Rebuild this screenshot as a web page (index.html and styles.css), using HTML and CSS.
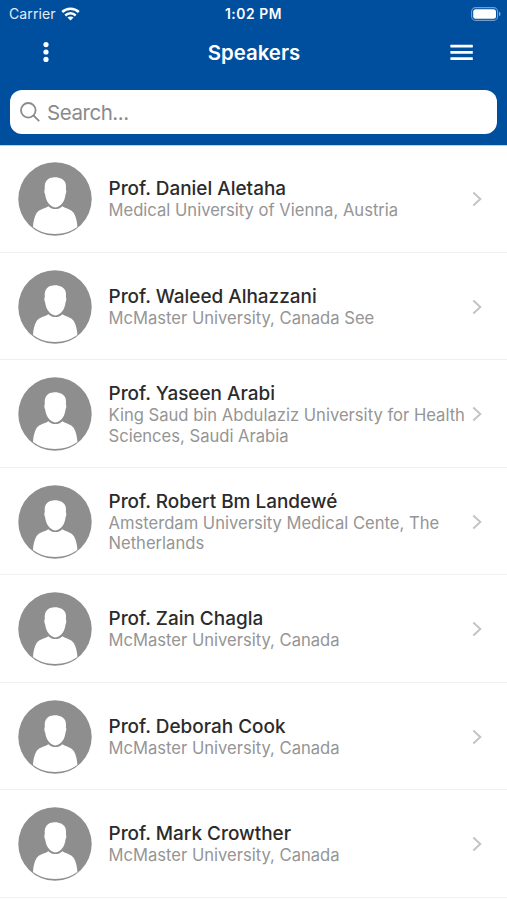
FILE: index.html
```html
<!DOCTYPE html>
<html lang="en">
  <head>
    <meta charset="UTF-8" />
    <meta name="viewport" content="width=device-width, initial-scale=1.0" />
    <title>Speakers</title>
    <link rel="stylesheet" href="styles.css">
  </head>
  <body>
    <svg class="sprite" width="0" height="0">
      <symbol id="person" viewBox="0 0 74 74">
        <circle cx="37" cy="37" r="36.7" fill="#8e8e8e" />
        <path fill="#fff" d="M26.8 27C26 19 30 15.6 35 15.4C40 14.6 46.2 16.6 47.6 21.5C48.2 24 48 26 47.9 27.5C48.7 28.4 48.3 31 47.5 32.4C47 38.6 43.2 44.8 37.4 45.4C31.6 44.8 27.8 38.6 27.2 32.4C26.3 31 26 28.4 26.8 27Z" />
        <path fill="#fff" d="M30.4 44.2C34.4 48 40.4 48 44.4 44.2C47.4 46.4 53 46.8 55.8 51C58.2 55 59.1 60 59.4 65C53 69.6 45.5 71.9 37 71.9C28.5 71.9 21 69.6 15 65C15.2 60 16.2 55 18.6 51C21.4 46.8 27.4 46.4 30.4 44.2Z" />
      </symbol>
      <symbol id="chevron" viewBox="0 0 10 16">
        <path d="M1.3 1.6L8.3 8L1.3 14.4" fill="none" stroke="#c4c4c6" stroke-width="2" />
      </symbol>
    </svg>

    <header class="header">
      <div class="status">
        <div class="carrier">
          <span>Carrier</span>
          <svg width="19" height="14" viewBox="0 0 19 14" fill="none" stroke="#fff" stroke-width="2.5">
            <path d="M1.2 5C5.8 .6 13.2 .6 17.8 5" />
            <path d="M4.3 8.5C7.2 5.6 11.8 5.6 14.7 8.5" />
            <path d="M9.5 13.6L6.5 10.6C8.1 9.1 10.9 9.1 12.5 10.6Z" fill="#fff" stroke="none" />
          </svg>
        </div>
        <span class="time">1:02 PM</span>
        <svg class="battery" width="30" height="14" viewBox="0 0 30 14">
          <rect x=".6" y=".6" width="26" height="12.8" rx="4" fill="none" stroke="#fff" stroke-opacity=".45" stroke-width="1.1" />
          <rect x="2.2" y="2.2" width="22.8" height="9.6" rx="2.5" fill="#fff" />
          <path d="M28 4.8C30 5.4 30 8.6 28 9.2Z" fill="#fff" fill-opacity=".5" />
        </svg>
      </div>

      <nav class="navbar">
        <svg width="6" height="22" viewBox="0 0 6 22" fill="#fff">
          <circle cx="3" cy="3.6" r="2.6" />
          <circle cx="3" cy="11" r="2.6" />
          <circle cx="3" cy="18.4" r="2.6" />
        </svg>
        <h1>Speakers</h1>
        <svg class="menu" width="23" height="17" viewBox="0 0 23 17" fill="#fff">
          <rect x=".4" y=".8" width="22.4" height="2.6" rx=".5" />
          <rect x=".4" y="7.1" width="22.4" height="2.6" rx=".5" />
          <rect x=".4" y="13.3" width="22.4" height="2.6" rx=".5" />
        </svg>
      </nav>

      <div class="search">
        <svg width="20" height="20" viewBox="0 0 20 20" fill="none" stroke="#8a8a8e" stroke-width="1.8">
          <circle cx="8.3" cy="8.3" r="7.3" />
          <path d="M13.4 13.4L19.2 19.2" />
        </svg>
        <span>Search...</span>
      </div>
    </header>

    <ul class="speakers">
      <li class="speaker">
        <svg class="avatar"><use href="#person" /></svg>
        <div class="info">
          <h2>Prof. Daniel Aletaha</h2>
          <p>Medical University of Vienna, Austria</p>
        </div>
        <svg class="chevron"><use href="#chevron" /></svg>
      </li>
      <li class="speaker">
        <svg class="avatar"><use href="#person" /></svg>
        <div class="info">
          <h2>Prof. Waleed Alhazzani</h2>
          <p>McMaster University, Canada See</p>
        </div>
        <svg class="chevron"><use href="#chevron" /></svg>
      </li>
      <li class="speaker">
        <svg class="avatar"><use href="#person" /></svg>
        <div class="info">
          <h2>Prof. Yaseen Arabi</h2>
          <p>King Saud bin Abdulaziz University for Health Sciences, Saudi Arabia</p>
        </div>
        <svg class="chevron"><use href="#chevron" /></svg>
      </li>
      <li class="speaker">
        <svg class="avatar"><use href="#person" /></svg>
        <div class="info">
          <h2>Prof. Robert Bm Landewé</h2>
          <p>Amsterdam University Medical Cente, The Netherlands</p>
        </div>
        <svg class="chevron"><use href="#chevron" /></svg>
      </li>
      <li class="speaker">
        <svg class="avatar"><use href="#person" /></svg>
        <div class="info">
          <h2>Prof. Zain Chagla</h2>
          <p>McMaster University, Canada</p>
        </div>
        <svg class="chevron"><use href="#chevron" /></svg>
      </li>
      <li class="speaker">
        <svg class="avatar"><use href="#person" /></svg>
        <div class="info">
          <h2>Prof. Deborah Cook</h2>
          <p>McMaster University, Canada</p>
        </div>
        <svg class="chevron"><use href="#chevron" /></svg>
      </li>
      <li class="speaker">
        <svg class="avatar"><use href="#person" /></svg>
        <div class="info">
          <h2>Prof. Mark Crowther</h2>
          <p>McMaster University, Canada</p>
        </div>
        <svg class="chevron"><use href="#chevron" /></svg>
      </li>
    </ul>
  </body>
</html>
```
FILE: styles.css
```css
* {
  box-sizing: border-box;
}

body {
  height: 900px;
  margin: 0;
  overflow: hidden;
  font-family: Inter, "Liberation Sans", sans-serif;
  background: #fff;
}

.sprite {
  display: block;
}

svg {
  flex-shrink: 0;
}

.header {
  height: 145px;
  background: #004f9f;
  box-shadow: 0 1px 0 #b0d5f8;
  color: #fff;
}

.status {
  display: grid;
  grid-template-columns: 1fr auto 1fr;
  align-items: center;
  height: 27px;
  padding: 0 6px 0 9px;
  font-size: 14px;
}

.carrier {
  display: flex;
  align-items: center;
  gap: 5px;
  color: #e3edf7;
  letter-spacing: 0.1px;
}

.time {
  margin-left: -3px;
  font-size: 13.8px;
  font-weight: 600;
  letter-spacing: 0.6px;
}

.battery {
  justify-self: end;
}

.navbar {
  display: grid;
  grid-template-columns: 1fr auto 1fr;
  align-items: center;
  height: 50px;
  padding: 0 34px 0 43px;
}

.navbar h1 {
  margin: 0 0 0 -8px;
  font-size: 20.4px;
  font-weight: 600;
}

.menu {
  justify-self: end;
}

.search {
  display: flex;
  align-items: center;
  gap: 7px;
  height: 44px;
  margin: 13px 10px 0;
  padding: 0 10px;
  border-radius: 12px;
  background: #fff;
  font-size: 20.5px;
  letter-spacing: -0.45px;
  color: #8a8a8e;
}

.speakers {
  margin: 0;
  padding: 0;
  list-style: none;
}

.speaker {
  display: flex;
  align-items: center;
  height: 107.5px;
  padding: 1.5px 25px 0 17.5px;
  border-bottom: 1.5px solid #f0f0f0;
}

.avatar {
  width: 74px;
  height: 74px;
}

.info {
  flex: 1;
  margin-left: 17px;
}

.info h2 {
  margin: 0;
  font-size: 18.95px;
  font-weight: 500;
  line-height: 23px;
  color: #2b2b2b;
}

.info p {
  margin: 0;
  font-size: 16.6px;
  line-height: 20.5px;
  color: #959595;
}

.chevron {
  width: 10px;
  height: 16px;
}
```
